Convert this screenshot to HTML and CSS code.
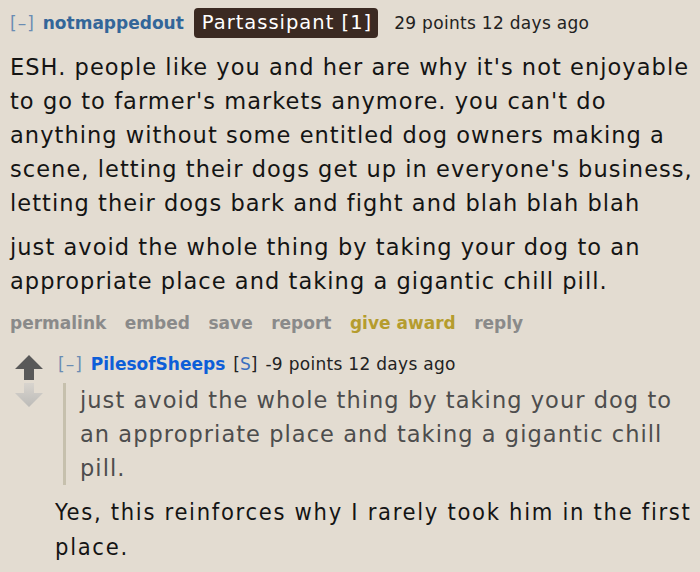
FILE: index.html
```html
<!DOCTYPE html>
<html>
<head>
<meta charset="utf-8">
<link rel="stylesheet" href="styles.css">
</head>
<body>
<div class="comment">
  <div class="tagline">
    <span class="expand">[–]</span>
    <a class="author">notmappedout</a>
    <span class="flair">Partassipant [1]</span>
    <span class="score">29 points 12 days ago</span>
  </div>
  <div class="md">
    <p>ESH. people like you and her are why it's not enjoyable to go to farmer's markets anymore. you can't do anything without some entitled dog owners making a scene, letting their dogs get up in everyone's business, letting their dogs bark and fight and blah blah blah</p>
    <p>just avoid the whole thing by taking your dog to an appropriate place and taking a gigantic chill pill.</p>
  </div>
  <ul class="buttons">
    <li>permalink</li>
    <li>embed</li>
    <li>save</li>
    <li>report</li>
    <li class="award">give award</li>
    <li>reply</li>
  </ul>
  <div class="child">
    <div class="midcol">
      <svg class="arrow" width="28" height="25" viewBox="0 0 28 25"><path d="M14 0 L28 14 L19 14 L19 25 L9 25 L9 14 L0 14 Z" fill="#595959"/></svg>
      <svg class="arrow" width="28" height="24" viewBox="0 0 28 24"><defs><linearGradient id="dg" x1="0" y1="0" x2="0" y2="1"><stop offset="0" stop-color="#d8d4ce"/><stop offset="1" stop-color="#bcbbb8"/></linearGradient></defs><path d="M9 0 L19 0 L19 10 L28 10 L14 24 L0 10 L9 10 Z" fill="url(#dg)"/></svg>
    </div>
    <div class="entry">
      <div class="tagline small">
        <span class="expand">[–]</span>
        <a class="author sub">PilesofSheeps</a>
        <span class="op">[<span class="s">S</span>]</span>
        <span class="score">-9 points 12 days ago</span>
      </div>
      <div class="md inner">
        <blockquote>just avoid the whole thing by taking your dog to an appropriate place and taking a gigantic chill pill.</blockquote>
        <p class="narrow">Yes, this reinforces why I rarely took him in the first place.</p>
      </div>
    </div>
  </div>
</div>
</body>
</html>
```
FILE: styles.css
```css
html, body {
  margin: 0;
  padding: 0;
  background: #e3dcd1;
}
body {
  font-family: "DejaVu Sans", Verdana, sans-serif;
  color: #141414;
  width: 700px;
  height: 572px;
  overflow: hidden;
}
.comment {
  padding: 8px 0 0 10px;
}
.tagline {
  display: flex;
  align-items: center;
  font-size: 17px;
  height: 30px;
}
.expand {
  color: #6a8cb3;
  letter-spacing: 1px;
  margin-right: 8px;
}
.author {
  color: #336699;
  font-weight: bold;
  margin-right: 10px;
}
.flair {
  background: #3b2a22;
  color: #ffffff;
  font-size: 19.5px;
  letter-spacing: 1px;
  line-height: 30px;
  height: 30px;
  padding: 0 6px 0 8px;
  border-radius: 4px;
  margin-right: 16px;
}
.score {
  color: #222;
  letter-spacing: 0.3px;
}
.md {
  margin-top: 12px;
}
.md p {
  margin: 0 0 10px 0;
  font-size: 22.5px;
  line-height: 34px;
  letter-spacing: 1.05px;
}
.buttons {
  list-style: none;
  margin: 0;
  padding: 0;
  display: flex;
  gap: 18.5px;
  font-size: 17px;
  font-weight: bold;
  color: #8a8a8a;
  height: 30px;
  align-items: center;
}
.buttons .award {
  color: #b59c2e;
}
.child {
  display: flex;
  margin-top: 11px;
}
.midcol {
  width: 40px;
  padding-left: 5px;
  display: flex;
  flex-direction: column;
  align-items: flex-start;
  gap: 3px;
  padding-top: 6px;
}
.arrow {
  display: block;
}
.entry {
  flex: 1;
}
.tagline.small {
  padding-left: 3px;
}
.author.sub {
  color: #0d5ed8;
  margin-right: 8px;
}
.op {
  color: #222;
  margin-right: 8px;
}
.op .s {
  color: #3a6fc0;
}
.md.inner {
  margin-top: 4px;
}
blockquote {
  margin: 0 0 10px 8px;
  padding-left: 14px;
  border-left: 3px solid #c6c0ad;
  color: #4d4d4d;
  font-size: 22.5px;
  line-height: 34px;
  letter-spacing: 1.05px;
}
.md p.narrow {
  font-family: "DejaVu Sans Condensed", "DejaVu Sans", sans-serif;
  font-size: 23.5px;
  letter-spacing: 1.7px;
  line-height: 35px;
}
```
